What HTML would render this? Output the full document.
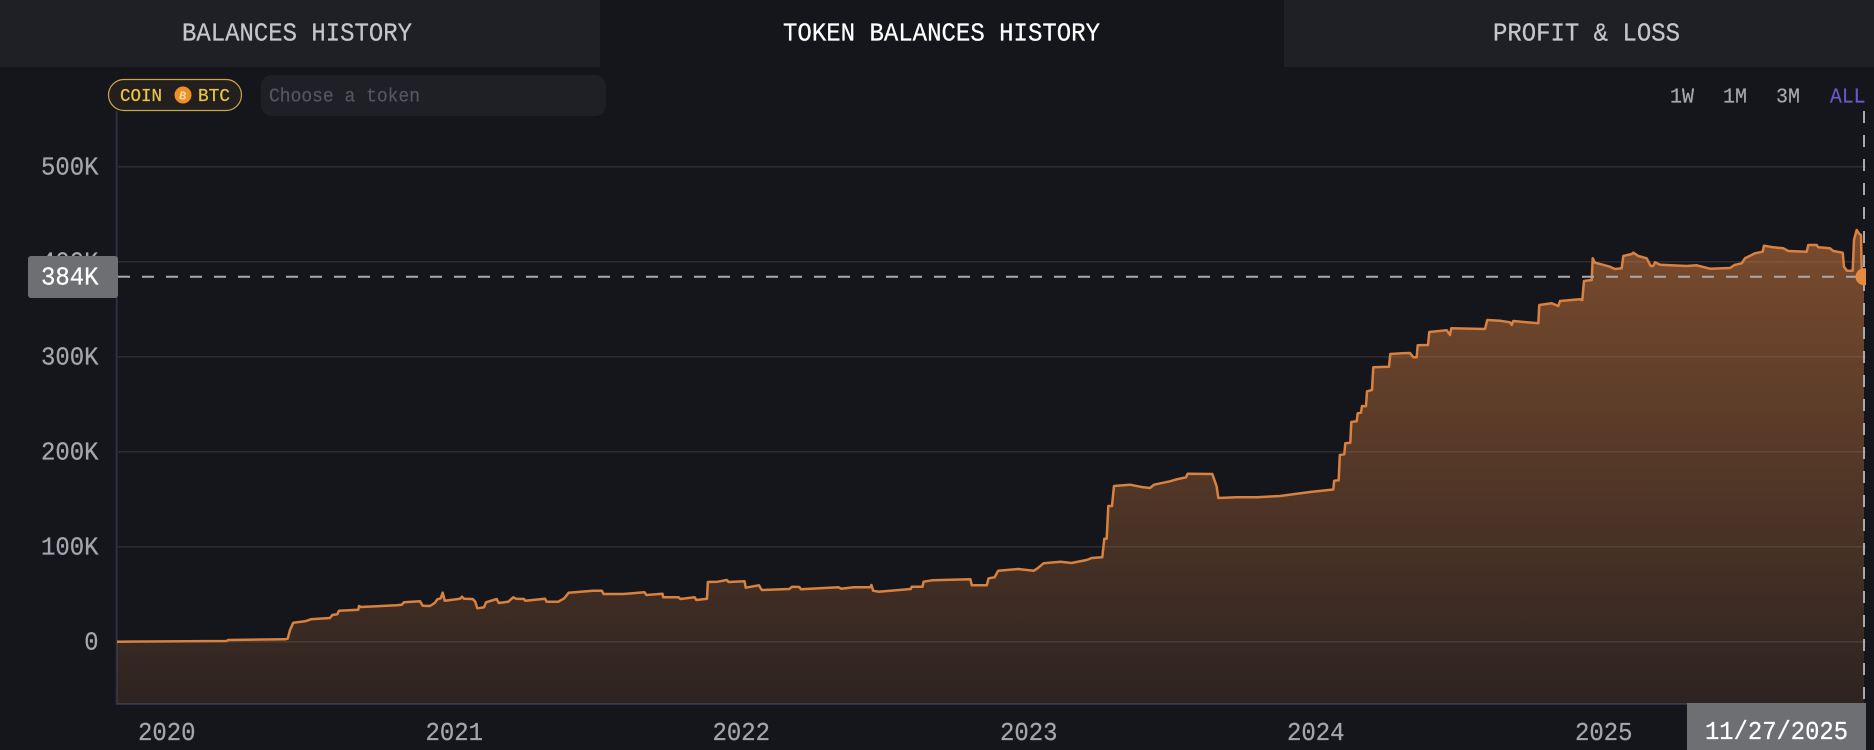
<!DOCTYPE html>
<html>
<head>
<meta charset="utf-8">
<style>
html,body{margin:0;padding:0;background:#14161c;width:1874px;height:750px;overflow:hidden}
svg{display:block}
text{font-family:"Liberation Mono",monospace}
</style>
</head>
<body>
<svg width="1874" height="750" viewBox="0 0 1874 750" xmlns="http://www.w3.org/2000/svg">
<defs>
<linearGradient id="g" gradientUnits="userSpaceOnUse" x1="0" y1="240" x2="0" y2="704">
<stop offset="0" stop-color="#dd8040" stop-opacity=".5"/>
<stop offset="1" stop-color="#dd8040" stop-opacity=".125"/>
</linearGradient>
<clipPath id="dotclip"><rect x="1840" y="250" width="26" height="50"/></clipPath>
</defs>
<rect width="1874" height="750" fill="#14161c"/>

<!-- tabs -->
<rect x="0" y="0" width="600" height="67" fill="#1f2026"/>
<rect x="1284" y="0" width="590" height="67" fill="#1f2026"/>
<g font-size="26" stroke-width=".25" lengthAdjust="spacingAndGlyphs">
<text x="182" y="40.5" fill="#c4c6cb" stroke="#c4c6cb" textLength="230" lengthAdjust="spacingAndGlyphs">BALANCES HISTORY</text>
<text x="783" y="40.5" fill="#ffffff" stroke="#ffffff" textLength="317" lengthAdjust="spacingAndGlyphs">TOKEN BALANCES HISTORY</text>
<text x="1493" y="40.5" fill="#c4c6cb" stroke="#c4c6cb" textLength="187" lengthAdjust="spacingAndGlyphs">PROFIT &amp; LOSS</text>
</g>

<!-- grid -->
<g stroke="#2b2d33" stroke-width="1.5">
<line x1="118" x2="1866" y1="166.7" y2="166.7"/>
<line x1="118" x2="1866" y1="261.7" y2="261.7"/>
<line x1="118" x2="1866" y1="356.7" y2="356.7"/>
<line x1="118" x2="1866" y1="451.7" y2="451.7"/>
<line x1="118" x2="1866" y1="546.7" y2="546.7"/>
<line x1="118" x2="1866" y1="641.7" y2="641.7"/>
</g>
<line x1="116.7" x2="116.7" y1="111" y2="705" stroke="#2e3045" stroke-width="2"/>
<line x1="116" x2="1866" y1="704" y2="704" stroke="#2e3045" stroke-width="2"/>

<!-- area -->
<path fill="url(#g)" d="M117,704 L117,641.7 L226.7,641 L228,640 L285,639.3 L287.7,638.7 L290,630 L293.3,622.7 L305,621.3 L307,620.7 L310.7,619.3 L330,618 L332.3,615 L337.3,614.3 L339,610.7 L358.3,609.7 L359,606 L360.7,607 L396.7,605.3 L401.7,604.7 L404,602.3 L420,601.3 L422.7,605.7 L430,606 L435,602.7 L437.3,599.3 L440.7,598.3 L442.7,592.7 L444.7,600.7 L460,598.7 L462,596.7 L464,598.7 L472.7,599 L475.3,601.7 L477.3,608.3 L484,607.3 L486,602.3 L496.7,599 L498.7,603 L508.3,601.7 L513.3,597.3 L516,598.7 L524,599 L525.3,600.7 L545,598.7 L546.7,601.7 L558.3,601.7 L564.3,598.3 L568.6,592.7 L592.9,590.7 L601.8,590.7 L603.6,594 L623,594 L644.6,592.3 L646.4,595 L662.5,593.7 L663.2,597.3 L678.6,597.3 L680.4,599 L694.6,597.3 L696.4,600 L707,598.7 L707.9,582 L717.9,581.7 L726.8,580 L728.6,582 L744.6,581.3 L745.7,587.7 L758.9,585.3 L761.8,590 L789.3,589 L792.1,586.7 L799.3,587 L801,589.3 L838.6,587.3 L841,588.7 L853.6,587.3 L870.4,587.3 L871.4,585 L873.2,590.7 L878.6,591.7 L910.7,589 L911.8,586.7 L922.5,586.7 L923.6,581.7 L932.1,580.3 L970.4,579.3 L971.8,585.3 L986.8,585.3 L988.6,578.3 L994.6,577.3 L998.2,570.7 L1017.9,569 L1033.9,570.7 L1037.5,568.3 L1043.6,563.3 L1060.7,561.7 L1071.4,563 L1086.7,560 L1091.7,558 L1102.3,557.3 L1104.3,538.7 L1106.7,538.7 L1108.3,506 L1112,506 L1114,486 L1130,484.7 L1143.3,487.3 L1150,488 L1154,484.7 L1170,481.3 L1176.7,479.3 L1186,477.3 L1187.7,473.7 L1212.3,474 L1215,481.7 L1216.7,486.7 L1218.3,498 L1236.7,497.3 L1256.7,497.3 L1280,496 L1310,492 L1333.3,489.5 L1334.2,480.7 L1338.7,480.3 L1339.8,455 L1344.3,454.3 L1345.3,443.3 L1350.3,442.7 L1351.3,422 L1356.7,421.3 L1357.7,413.3 L1361,412.7 L1362,406 L1366,406.3 L1367,391.3 L1372,390 L1373.3,367.3 L1389,366.7 L1390.3,354 L1401.7,353.3 L1410,353 L1413.3,357.3 L1416.7,357.3 L1417.7,345.3 L1428,345 L1429.3,332 L1446.7,330.3 L1450,335 L1451.3,328.3 L1485,329 L1487.3,320 L1500,320.7 L1510,322.3 L1511.7,325 L1513.3,321 L1538.3,323.3 L1539.3,305 L1551.7,303.3 L1558.3,306 L1560,301 L1580,299.3 L1582.3,300 L1584,281 L1591.7,280 L1592.7,258.3 L1595,262.7 L1610,266.7 L1615,269 L1621.7,268.3 L1623.3,256 L1631.7,254 L1633.3,252.7 L1638.3,256 L1646.7,258.3 L1650.7,266 L1653.3,266 L1655,262.3 L1660,264.7 L1686.7,266 L1696.7,265.3 L1710,268.7 L1730,268 L1735,264.7 L1736,264.7 L1741.7,263.3 L1745,258.3 L1755,253.3 L1762.7,251.7 L1764,245.7 L1773.3,247.3 L1783.3,248.3 L1788.3,251 L1806.7,251.7 L1808.3,245 L1816.7,245 L1818.3,247.3 L1830,248.3 L1833.3,251 L1842.7,252.7 L1844,266.7 L1847,270.7 L1852.7,270.7 L1854,240 L1856.7,230 L1859.3,234 L1861,235 L1861.7,270 L1864,276.7 L1864,704 Z"/>
<path fill="none" stroke="#d9813f" stroke-width="2.5" stroke-linejoin="round" d="M117,641.7 L226.7,641 L228,640 L285,639.3 L287.7,638.7 L290,630 L293.3,622.7 L305,621.3 L307,620.7 L310.7,619.3 L330,618 L332.3,615 L337.3,614.3 L339,610.7 L358.3,609.7 L359,606 L360.7,607 L396.7,605.3 L401.7,604.7 L404,602.3 L420,601.3 L422.7,605.7 L430,606 L435,602.7 L437.3,599.3 L440.7,598.3 L442.7,592.7 L444.7,600.7 L460,598.7 L462,596.7 L464,598.7 L472.7,599 L475.3,601.7 L477.3,608.3 L484,607.3 L486,602.3 L496.7,599 L498.7,603 L508.3,601.7 L513.3,597.3 L516,598.7 L524,599 L525.3,600.7 L545,598.7 L546.7,601.7 L558.3,601.7 L564.3,598.3 L568.6,592.7 L592.9,590.7 L601.8,590.7 L603.6,594 L623,594 L644.6,592.3 L646.4,595 L662.5,593.7 L663.2,597.3 L678.6,597.3 L680.4,599 L694.6,597.3 L696.4,600 L707,598.7 L707.9,582 L717.9,581.7 L726.8,580 L728.6,582 L744.6,581.3 L745.7,587.7 L758.9,585.3 L761.8,590 L789.3,589 L792.1,586.7 L799.3,587 L801,589.3 L838.6,587.3 L841,588.7 L853.6,587.3 L870.4,587.3 L871.4,585 L873.2,590.7 L878.6,591.7 L910.7,589 L911.8,586.7 L922.5,586.7 L923.6,581.7 L932.1,580.3 L970.4,579.3 L971.8,585.3 L986.8,585.3 L988.6,578.3 L994.6,577.3 L998.2,570.7 L1017.9,569 L1033.9,570.7 L1037.5,568.3 L1043.6,563.3 L1060.7,561.7 L1071.4,563 L1086.7,560 L1091.7,558 L1102.3,557.3 L1104.3,538.7 L1106.7,538.7 L1108.3,506 L1112,506 L1114,486 L1130,484.7 L1143.3,487.3 L1150,488 L1154,484.7 L1170,481.3 L1176.7,479.3 L1186,477.3 L1187.7,473.7 L1212.3,474 L1215,481.7 L1216.7,486.7 L1218.3,498 L1236.7,497.3 L1256.7,497.3 L1280,496 L1310,492 L1333.3,489.5 L1334.2,480.7 L1338.7,480.3 L1339.8,455 L1344.3,454.3 L1345.3,443.3 L1350.3,442.7 L1351.3,422 L1356.7,421.3 L1357.7,413.3 L1361,412.7 L1362,406 L1366,406.3 L1367,391.3 L1372,390 L1373.3,367.3 L1389,366.7 L1390.3,354 L1401.7,353.3 L1410,353 L1413.3,357.3 L1416.7,357.3 L1417.7,345.3 L1428,345 L1429.3,332 L1446.7,330.3 L1450,335 L1451.3,328.3 L1485,329 L1487.3,320 L1500,320.7 L1510,322.3 L1511.7,325 L1513.3,321 L1538.3,323.3 L1539.3,305 L1551.7,303.3 L1558.3,306 L1560,301 L1580,299.3 L1582.3,300 L1584,281 L1591.7,280 L1592.7,258.3 L1595,262.7 L1610,266.7 L1615,269 L1621.7,268.3 L1623.3,256 L1631.7,254 L1633.3,252.7 L1638.3,256 L1646.7,258.3 L1650.7,266 L1653.3,266 L1655,262.3 L1660,264.7 L1686.7,266 L1696.7,265.3 L1710,268.7 L1730,268 L1735,264.7 L1736,264.7 L1741.7,263.3 L1745,258.3 L1755,253.3 L1762.7,251.7 L1764,245.7 L1773.3,247.3 L1783.3,248.3 L1788.3,251 L1806.7,251.7 L1808.3,245 L1816.7,245 L1818.3,247.3 L1830,248.3 L1833.3,251 L1842.7,252.7 L1844,266.7 L1847,270.7 L1852.7,270.7 L1854,240 L1856.7,230 L1859.3,234 L1861,235 L1861.7,270 L1864,276.7"/>

<!-- crosshair -->
<line x1="118" x2="1866" y1="276.7" y2="276.7" stroke="#a9a9ad" stroke-width="2" stroke-dasharray="12 12"/>
<line x1="1864" x2="1864" y1="111" y2="704" stroke="#a9a9ad" stroke-width="2" stroke-dasharray="12 12"/>
<circle cx="1864" cy="276.7" r="8.5" fill="#e58a3f" clip-path="url(#dotclip)"/>

<!-- y labels -->
<g font-size="26" fill="#a4a6ac" stroke="#a4a6ac" stroke-width=".25">
<text x="41" y="174.5" textLength="57.5" lengthAdjust="spacingAndGlyphs">500K</text>
<text x="41" y="269.5" textLength="57.5" lengthAdjust="spacingAndGlyphs">400K</text>
<text x="41" y="364.5" textLength="57.5" lengthAdjust="spacingAndGlyphs">300K</text>
<text x="41" y="459.5" textLength="57.5" lengthAdjust="spacingAndGlyphs">200K</text>
<text x="41" y="554.5" textLength="57.5" lengthAdjust="spacingAndGlyphs">100K</text>
<text x="84.2" y="649.5" textLength="14.3" lengthAdjust="spacingAndGlyphs">0</text>
</g>
<rect x="28" y="256" width="90" height="42" rx="3" fill="#6e6f72"/>
<text x="41" y="284.5" font-size="26" fill="#ffffff" stroke="#ffffff" stroke-width=".25" textLength="57.5" lengthAdjust="spacingAndGlyphs">384K</text>

<!-- x labels -->
<g font-size="26" fill="#a4a6ac" stroke="#a4a6ac" stroke-width=".25">
<text x="138" y="740" textLength="57.5" lengthAdjust="spacingAndGlyphs">2020</text>
<text x="425.5" y="740" textLength="57.5" lengthAdjust="spacingAndGlyphs">2021</text>
<text x="712.5" y="740" textLength="57.5" lengthAdjust="spacingAndGlyphs">2022</text>
<text x="1000" y="740" textLength="57.5" lengthAdjust="spacingAndGlyphs">2023</text>
<text x="1287" y="740" textLength="57.5" lengthAdjust="spacingAndGlyphs">2024</text>
<text x="1575" y="740" textLength="57.5" lengthAdjust="spacingAndGlyphs">2025</text>
</g>
<rect x="1687" y="703" width="179" height="47" fill="#6e6f72"/>
<text x="1705" y="739" font-size="26" fill="#ffffff" stroke="#ffffff" stroke-width=".25" textLength="143" lengthAdjust="spacingAndGlyphs">11/27/2025</text>

<!-- coin pill -->
<rect x="108.5" y="79.5" width="133" height="31" rx="15.5" fill="#221f1e" stroke="#c7a846" stroke-width="1.2"/>
<text x="120" y="101" font-size="18.6" fill="#eac544" stroke="#eac544" stroke-width=".25" textLength="42" lengthAdjust="spacingAndGlyphs">COIN</text>
<circle cx="183" cy="95" r="8.5" fill="#ee8f25"/>
<text x="183" y="99.5" font-size="12" font-weight="bold" fill="#fbd9a8" text-anchor="middle" transform="rotate(12 183 95)">B</text>
<text x="198" y="101" font-size="18.6" fill="#eac544" stroke="#eac544" stroke-width=".25" textLength="32" lengthAdjust="spacingAndGlyphs">BTC</text>

<!-- input -->
<rect x="261" y="75" width="345" height="41" rx="11" fill="#1f2026"/>
<text x="269" y="101.5" font-size="19" fill="#55575e" stroke="#55575e" stroke-width=".2" textLength="151" lengthAdjust="spacingAndGlyphs">Choose a token</text>

<!-- range -->
<g font-size="21" fill="#a5a7ad" stroke="#a5a7ad" stroke-width=".2">
<text x="1670" y="102.5" textLength="24" lengthAdjust="spacingAndGlyphs">1W</text>
<text x="1723" y="102.5" textLength="24" lengthAdjust="spacingAndGlyphs">1M</text>
<text x="1776" y="102.5" textLength="24" lengthAdjust="spacingAndGlyphs">3M</text>
<text x="1830" y="102.5" fill="#6a58c4" stroke="#6a58c4" textLength="35.5" lengthAdjust="spacingAndGlyphs">ALL</text>
</g>
</svg>
</body>
</html>
